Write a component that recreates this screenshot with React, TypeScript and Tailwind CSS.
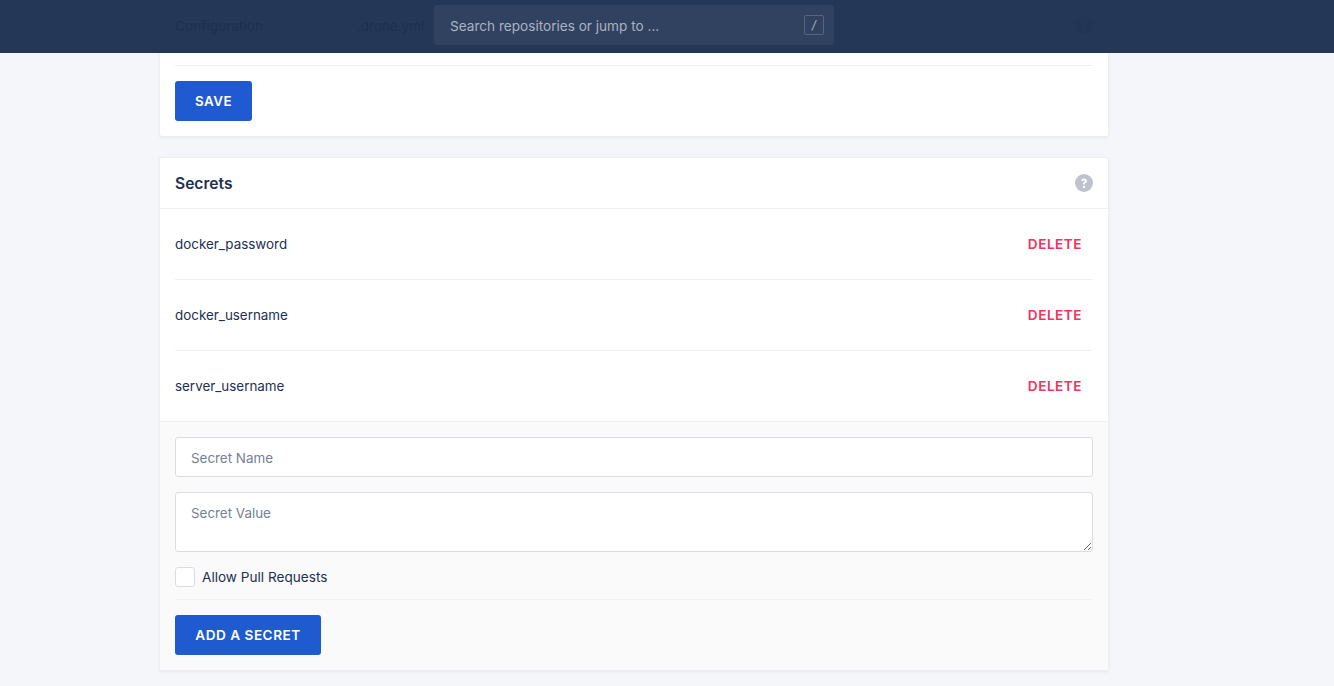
const secrets = ['docker_password', 'docker_username', 'server_username']

function HelpIcon() {
  return (
    <svg width="18" height="18" viewBox="0 0 18 18">
      <circle cx="9" cy="9" r="9" fill="#bdc2cc" />
      <path d="M6.200 7.100c0-1.600 1.200-2.600 2.900-2.600s2.800 1 2.800 2.400c0 1-.5 1.600-1.400 2.100-.6.400-.8.600-.8 1.100v.3H8v-.5c0-1 .4-1.500 1.100-2 .6-.4.900-.6.900-1 0-.4-.4-.7-.9-.7-.6 0-1 .4-1 .9H6.200z" fill="#fff" />
      <circle cx="9" cy="12.900" r="1.200" fill="#fff" />
    </svg>
  )
}

export default function App() {
  return (
    <div className="h-[686px] overflow-hidden bg-[#f5f6f9] font-['Inter',sans-serif] text-[13.4px] leading-5 text-[#1e3050]">
      {/* Sticky nav, translucent so the settings row shows through */}
      <header className="fixed top-0 left-0 right-0 z-10 h-[53px] bg-[#1b2f50]/[.96] flex items-start pl-[434px] pt-[5px]">
        <div className="w-[400px] h-10 rounded-[3px] bg-[#314261] flex items-center justify-between pl-4 pr-2.5">
          <span className="text-[13.6px] text-[#a9b2c1] pt-px">Search repositories or jump to ...</span>
          <span className="w-5 h-5 border border-[#56647e] rounded-[2px] flex items-center justify-center text-xs text-[#a9b2c1] italic">/</span>
        </div>
      </header>

      <main className="w-[950px] ml-[159px] flex flex-col gap-5">
        <section className="bg-white rounded-b-[3px] border-x border-b border-[#eceef2] shadow-[0_1px_3px_rgba(25,45,77,0.06)] px-[15px] pb-[15px]">
          <div className="h-[66px] border-b border-[#eff0f3] flex items-start pt-4">
            <span className="w-[182px] text-[13.7px]">Configuration</span>
            <span className="flex-1">.drone.yml</span>
            <HelpIcon />
          </div>
          <button className="mt-[15px] h-10 w-[77px] rounded-[3px] bg-[#1f5ad0] text-white text-[13.4px] font-semibold tracking-[0.5px]">SAVE</button>
        </section>

        <section className="bg-white rounded-[3px] border border-[#eceef2] shadow-[0_1px_3px_rgba(25,45,77,0.06)]">
          <div className="h-[51px] px-[15px] border-b border-[#f0f1f4] flex items-center justify-between">
            <h2 className="text-[15.6px] font-semibold pt-px">Secrets</h2>
            <HelpIcon />
          </div>
          <div className="px-[15px]">
            {secrets.map((name) => (
              <div key={name} className="h-[71px] border-b border-[#f0f1f4] last:h-[70px] last:border-b-0 flex items-center justify-between">
                <span>{name}</span>
                <button className="pr-[11px] text-[13.6px] text-[#f2335c] font-semibold tracking-[0.5px]">DELETE</button>
              </div>
            ))}
          </div>
          <div className="bg-[#fafafa] border-t border-[#eff0f3] p-[15px] rounded-b-[3px]">
            <input
              placeholder="Secret Name"
              className="block w-full h-10 px-[15px] pt-px bg-white border border-[#dadde3] rounded-[3px] outline-none placeholder:text-[#748094]"
            />
            <textarea
              placeholder="Secret Value"
              className="block w-full h-[60px] mt-[15px] px-[15px] py-2.5 bg-white border border-[#dadde3] rounded-[3px] outline-none placeholder:text-[#748094]"
            />
            <label className="mt-[15px] flex items-center gap-[7px] text-[13.6px]">
              <span className="w-5 h-5 bg-white border border-[#dadde3] rounded-[3px]" />
              Allow Pull Requests
            </label>
            <div className="mt-3 border-t border-[#eff0f3] pt-[15px]">
              <button className="h-10 w-[146px] rounded-[3px] bg-[#1f5ad0] text-white text-[13.6px] font-semibold tracking-[0.5px]">ADD A SECRET</button>
            </div>
          </div>
        </section>
      </main>
    </div>
  )
}
